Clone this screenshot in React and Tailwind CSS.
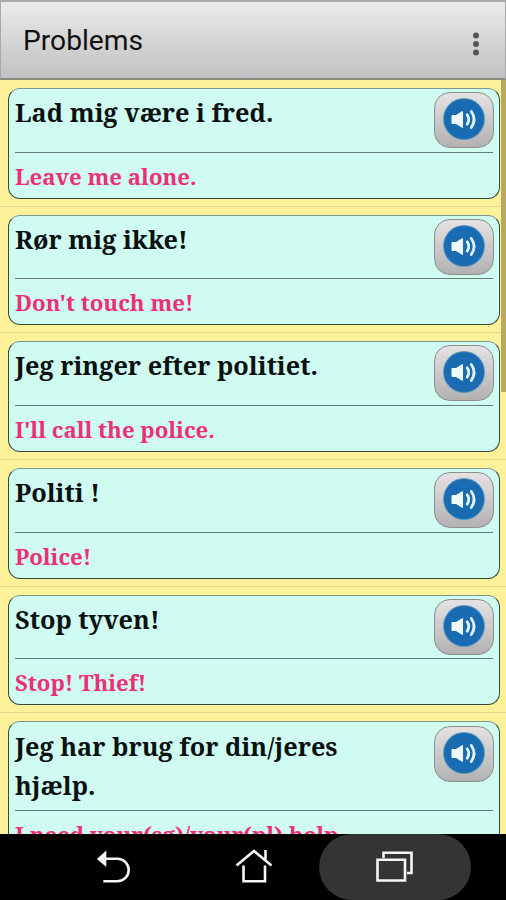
const phrases = [
  { text: "Lad mig være i fred.", translation: "Leave me alone." },
  { text: "Rør mig ikke!", translation: "Don't touch me!" },
  { text: "Jeg ringer efter politiet.", translation: "I'll call the police." },
  { text: "Politi !", translation: "Police!" },
  { text: "Stop tyven!", translation: "Stop! Thief!" },
  { text: "Jeg har brug for din/jeres hjælp.", translation: "I need your(sg)/your(pl) help." },
];

function SpeakerButton() {
  return (
    <button type="button" aria-label="Play" className="flex h-14 w-[60px] shrink-0 items-center justify-center rounded-[16px] border border-[#89918f] bg-linear-to-b from-[#e4e2e2] to-[#b3b1b2]">
      <svg width="44" height="44" viewBox="0 0 44 44" className="relative -top-px">
        <circle cx="22" cy="22" r="21" fill="#5b96c0" />
        <circle cx="22" cy="22" r="20" fill="#1a6cb2" />
        <path d="M10 18.500h4l6.500-4v16l-6.500-4h-4z" fill="#eef8fd" stroke="#eef8fd" strokeLinejoin="round" />
        <path d="M25.200 17.800q3.200 4.700 0 9.400" fill="none" stroke="#e4f3fb" strokeWidth="2.8" strokeLinecap="round" />
        <path d="M29.300 14.500q5.600 8 0 16" fill="none" stroke="#e4f3fb" strokeWidth="2.8" strokeLinecap="round" />
      </svg>
    </button>
  );
}

function PhraseRow({ phrase }) {
  return (
    <li className="border-b border-[#e2da90] pt-2 pr-1.5 pb-[7px] pl-2">
      <div className="rounded-xl border border-[#344b3c] border-t-[#7e9690] bg-[#d0fbf0] px-1.5 pb-[5px]">
        <div className="flex items-start justify-between border-b border-[#637b76] pt-[3.1px] pb-[3.6px]">
          <div className="mt-px w-[350px] pb-px text-[25.3px] leading-[39.5px] text-[#0a1110]">{phrase.text}</div>
          <div className="-mr-px">
            <SpeakerButton />
          </div>
        </div>
        <div className="h-10 pt-[4px] text-[22.2px] leading-[40px] whitespace-nowrap text-[#ec2f78]">{phrase.translation}</div>
      </div>
    </li>
  );
}

function NavBar() {
  return (
    <nav className="flex h-[66px] shrink-0 items-center bg-black pl-[39px] text-[#f5f5f5]">
      <button type="button" aria-label="Back" className="flex w-[150px] justify-center">
        <svg width="40" height="40" viewBox="0 0 40 40" fill="none" stroke="currentColor" strokeWidth="2.6">
          <path d="M11 11.800h12.500a11.200 11.200 0 0 1 0 22.400H9.300" />
          <path d="M2.800 12l9.500-8.500v16.500z" fill="currentColor" stroke="none" />
        </svg>
      </button>
      <button type="button" aria-label="Home" className="flex w-[130px] justify-center">
        <svg width="40" height="40" viewBox="0 0 40 40" fill="none" stroke="currentColor" strokeWidth="2.6">
          <path d="M2.500 18.500L20 4l17.500 14.500" />
          <path d="M9.500 18.500v15.700h21.500V18.500M31.500 12.500V3" />
        </svg>
      </button>
      <button type="button" aria-label="Recent apps" className="flex h-[66px] w-[152px] items-center justify-center rounded-[33px] bg-[#343434]">
        <svg width="40" height="40" viewBox="0 0 40 40" fill="none" stroke="currentColor" strokeWidth="2.6">
          <path d="M2.500 12.800h27.500v20.700h-27.500z" />
          <path d="M8.500 11V5.800h28v20.200H32" />
        </svg>
      </button>
    </nav>
  );
}

export default function App() {
  return (
    <div className="flex h-[900px] w-[506px] flex-col overflow-hidden bg-[#fdf19a]">
      <header className="flex h-20 shrink-0 items-center justify-between border border-t-2 border-b-2 border-[#aaa9aa] border-b-[#8b897d] bg-linear-to-b from-[#ebebeb] to-[#c1c0c2] pr-[25px] pl-[22px]">
        <h1 className="pt-[3px] font-['Roboto',sans-serif] text-[28.2px] text-[#111]">Problems</h1>
        <svg width="8" height="26" viewBox="0 0 8 26" fill="#555" className="relative top-1">
          <circle cx="4" cy="4.500" r="3" />
          <circle cx="4" cy="13" r="3" />
          <circle cx="4" cy="21.500" r="3" />
        </svg>
      </header>
      <main className="relative min-h-0 flex-1 overflow-hidden">
        <ul className="font-['Noto_Serif','DejaVu_Serif_Condensed','DejaVu_Serif',serif] font-bold">
          {phrases.map((phrase) => (
            <PhraseRow key={phrase.text} phrase={phrase} />
          ))}
        </ul>
        <div className="absolute top-0 right-0 h-[312px] w-[5px] bg-[#b7a961]" />
      </main>
      <NavBar />
    </div>
  );
}
